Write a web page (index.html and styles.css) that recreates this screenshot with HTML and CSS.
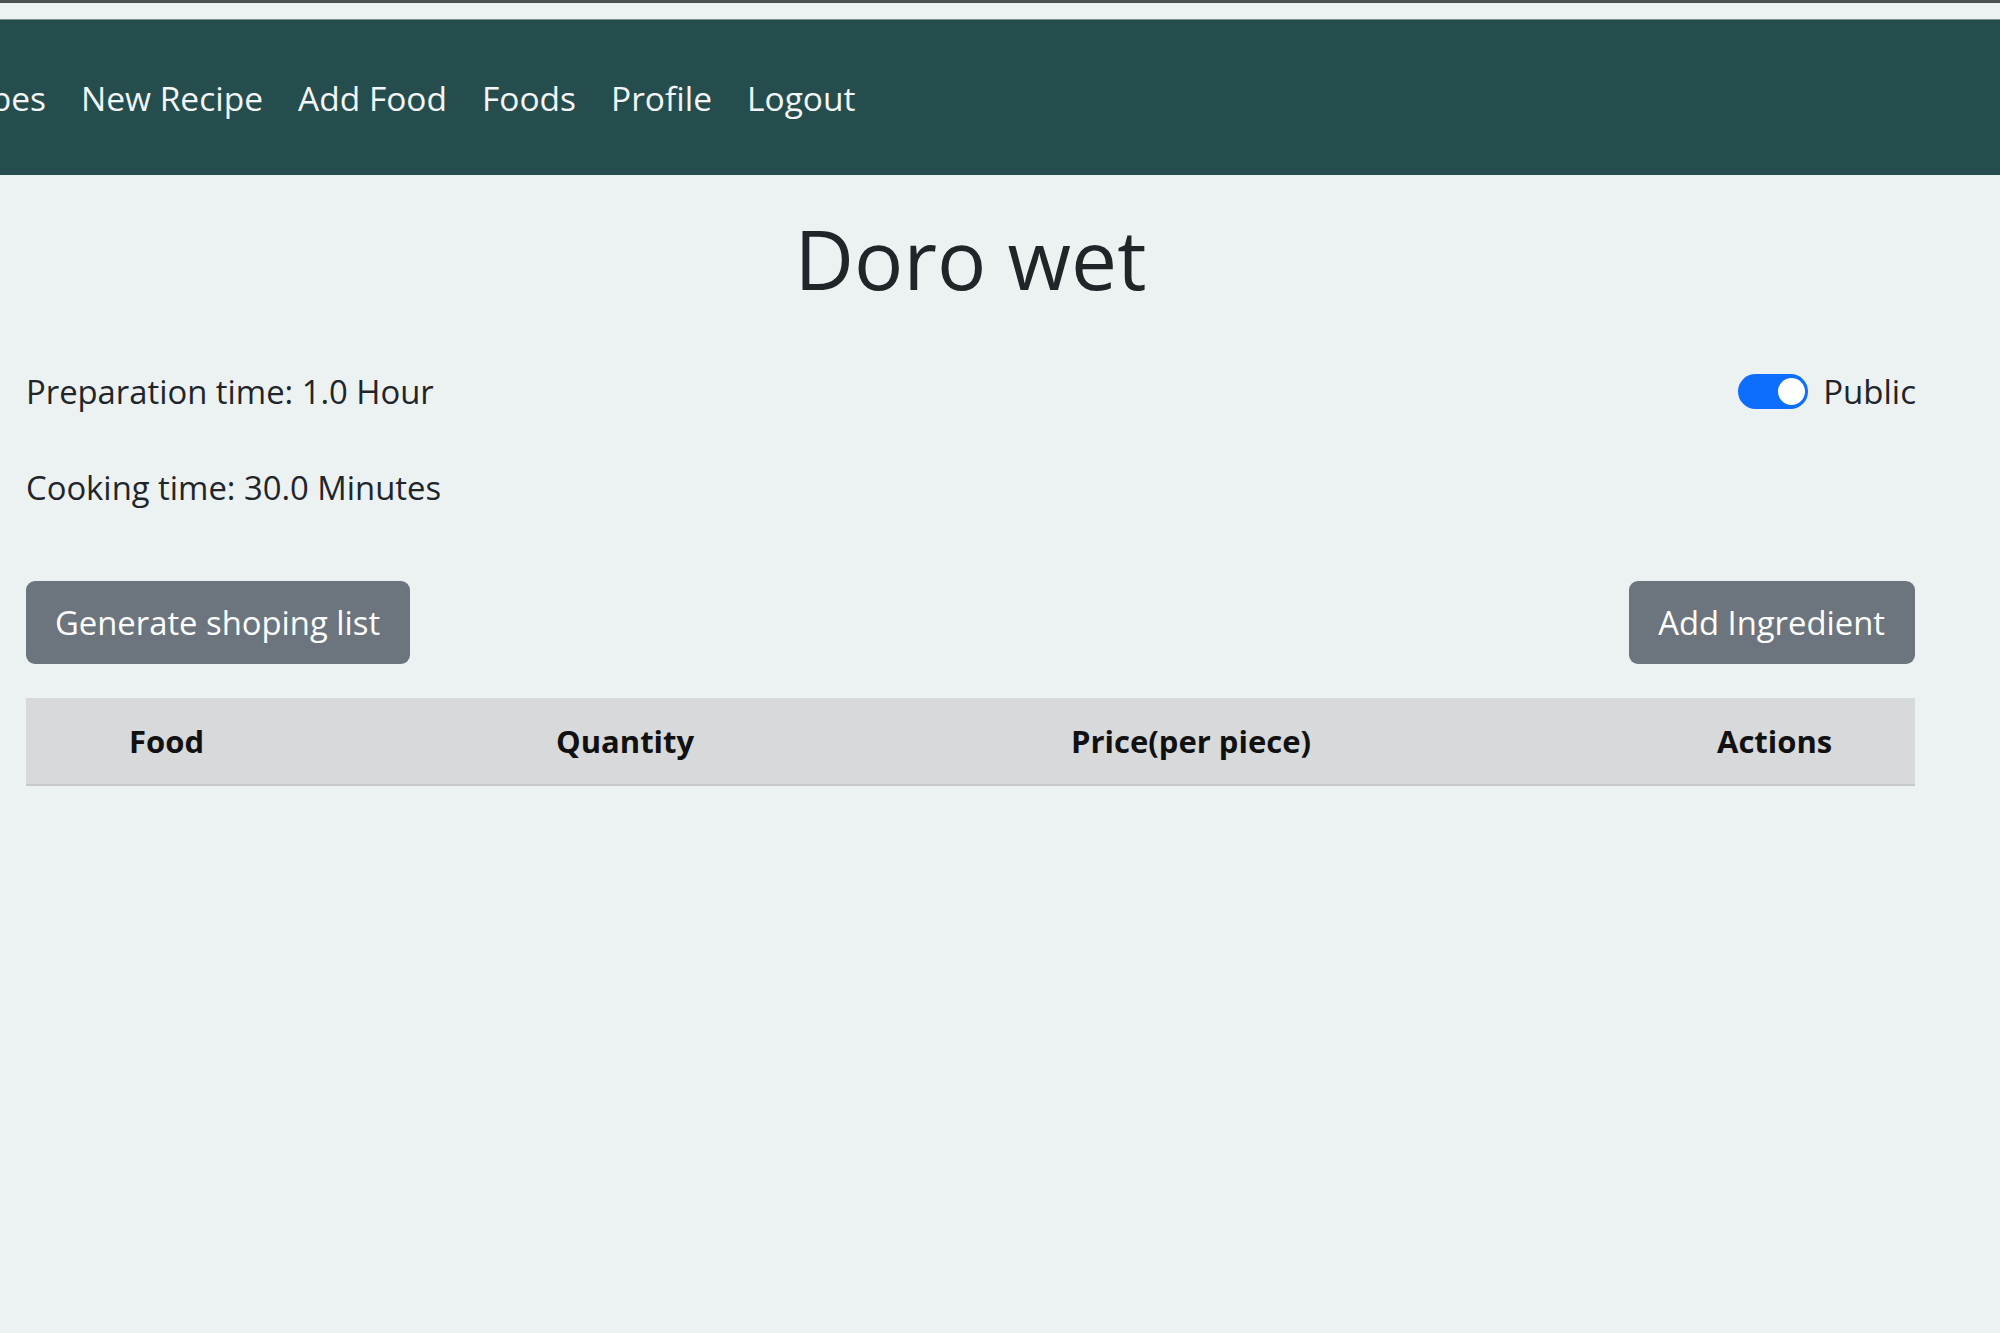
FILE: index.html
```html
<!DOCTYPE html>
<html lang="en">
<head>
<meta charset="utf-8">
<title>Doro wet</title>
<link rel="stylesheet" href="styles.css">
</head>
<body>
<div class="topline"></div>
<nav class="navbar">
  <div class="nav-clip"><a class="nav-link" href="#">Recipes</a></div>
  <a class="nav-link" href="#">New Recipe</a>
  <a class="nav-link" href="#">Add Food</a>
  <a class="nav-link" href="#">Foods</a>
  <a class="nav-link" href="#">Profile</a>
  <a class="nav-link" href="#">Logout</a>
</nav>
<main class="page">
  <h1 class="title">Doro wet</h1>
  <div class="info-row">
    <p class="info">Preparation time: 1.0 Hour</p>
    <label class="switch">
      <span class="switch-track"><span class="switch-knob"></span></span>
      <span class="switch-label">Public</span>
    </label>
  </div>
  <p class="info">Cooking time: 30.0 Minutes</p>
  <div class="actions">
    <button class="btn">Generate shoping list</button>
    <button class="btn">Add Ingredient</button>
  </div>
  <table class="table">
    <colgroup>
      <col class="c1"><col class="c2"><col class="c3"><col class="c4">
    </colgroup>
    <thead>
      <tr>
        <th>Food</th>
        <th>Quantity</th>
        <th>Price(per piece)</th>
        <th>Actions</th>
      </tr>
    </thead>
    <tbody></tbody>
  </table>
</main>
</body>
</html>
```
FILE: styles.css
```css
html, body {
  margin: 0;
  padding: 0;
  background: #ecf1f1;
  color: #212529;
  font-family: "Open Sans", "Noto Sans", sans-serif;
}

.topline {
  height: 3px;
  background: #4b5050;
}

.navbar {
  margin-top: 16px;
  height: 155px;
  border-top: 1px solid #7d9090;
  background: #254d4d;
  display: flex;
  align-items: center;
  gap: 35px;
  overflow: hidden;
}

.nav-clip {
  width: 46px;
  flex: 0 0 46px;
  overflow: hidden;
  display: flex;
  justify-content: flex-end;
}

.nav-link {
  color: #f3f6f6;
  text-decoration: none;
  font-size: 33.5px;
  line-height: 1.5;
  white-space: nowrap;
  position: relative;
  top: 1px;
}

.page {
  padding: 0 85px 40px 26px;
}

.title {
  margin: 34px 0 0;
  text-align: center;
  font-weight: 400;
  font-size: 82px;
  line-height: 98px;
}

.info-row {
  margin-top: 61px;
  display: flex;
  align-items: center;
  justify-content: space-between;
  height: 48px;
}

.info {
  margin: 0;
  font-size: 32.8px;
  line-height: 48px;
}

.info-row + .info {
  margin-top: 48px;
}

.switch {
  display: flex;
  align-items: center;
  gap: 15px;
  font-size: 33px;
  line-height: 48px;
  margin-right: -1px;
}

.switch-track {
  width: 70px;
  height: 35px;
  border-radius: 18px;
  background: #0d6efd;
  display: flex;
  align-items: center;
  justify-content: flex-end;
  padding-right: 3px;
  box-sizing: border-box;
  position: relative;
  top: -1px;
}

.switch-knob {
  width: 27px;
  height: 27px;
  border-radius: 50%;
  background: #fff;
}

.actions {
  margin-top: 69px;
  display: flex;
  justify-content: space-between;
}

.btn {
  height: 83px;
  padding: 0 30px 0 29px;
  border: 0;
  border-radius: 9px;
  background: #6c757d;
  color: #fff;
  font-family: "Open Sans", "Noto Sans", sans-serif;
  font-size: 32.8px;
  line-height: 1.5;
}

.table {
  margin-top: 34px;
  width: 100%;
  border-collapse: collapse;
  table-layout: fixed;
}

.c1 { width: 427px; }
.c2 { width: 515px; }
.c3 { width: 646px; }

.table thead tr {
  background: #d8d9da;
  border-bottom: 2px solid #c6c8c9;
}

.table th {
  height: 86px;
  padding: 0 0 0 103px;
  text-align: left;
  font-weight: 700;
  font-size: 31px;
  white-space: nowrap;
  color: #111;
}
```
